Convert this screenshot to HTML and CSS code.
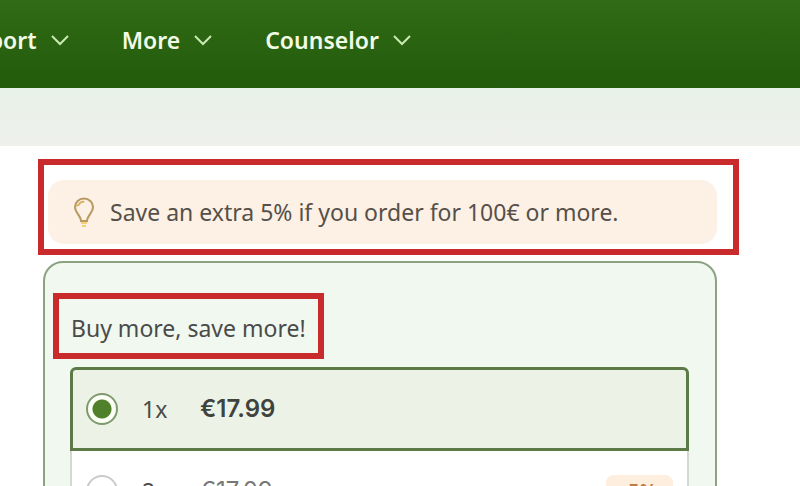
FILE: index.html
```html
<!DOCTYPE html>
<html lang="en">
  <head>
    <meta charset="UTF-8" />
    <meta name="viewport" content="width=device-width, initial-scale=1.0" />
    <title>Buy more, save more</title>
    <link rel="stylesheet" href="styles.css">
  </head>
  <body>
    <header class="header">
      <nav class="nav">
        <a href="#">Support
          <svg class="chevron" viewBox="0 0 18 12"><path d="M1 2l8 8 8-8" /></svg>
        </a>
        <a href="#">More
          <svg class="chevron" viewBox="0 0 18 12"><path d="M1 2l8 8 8-8" /></svg>
        </a>
        <a href="#">Counselor
          <svg class="chevron" viewBox="0 0 18 12"><path d="M1 2l8 8 8-8" /></svg>
        </a>
      </nav>
    </header>
    <div class="band"></div>

    <main class="content">
      <!-- discount notice -->
      <div class="mark mark-notice">
        <p class="notice">
          <svg class="bulb" viewBox="0 0 20 30">
            <path class="bulb-glass" d="M7 24C7 19 1 15.500 1 10a9 8.500 0 0 1 18 0C19 15.500 13 19 13 24z" />
            <path class="bulb-shine" d="M2 8c2 1 3 0 4-2s3 0 4-2" />
            <path class="bulb-base" d="M7 26h6M8 29h4" />
          </svg>
          Save an extra 5% if you order for 100€ or more.
        </p>
      </div>

      <!-- quantity offers -->
      <section class="card">
        <div class="mark mark-title">
          <h2 class="title">Buy more, save more!</h2>
        </div>
        <div class="options">
          <label class="option selected">
            <input type="radio" name="qty" value="1" checked />
            <span class="qty">1x</span>
            <span class="price">€17.99</span>
          </label>
          <label class="option">
            <input type="radio" name="qty" value="2" />
            <span class="qty">2x</span>
            <span class="price">€17.09</span>
            <span class="discount">-5%</span>
          </label>
        </div>
      </section>
    </main>
  </body>
</html>
```

FILE: styles.css
```css
* {
  box-sizing: border-box;
  margin: 0;
  padding: 0;
}
body {
  height: 100vh;
  overflow: hidden;
  background-color: #fff;
  color: #4a4b49;
  font-family: "Noto Sans", sans-serif;
  font-size: 23px;
  line-height: 32px;
}

/* header */
.header {
  padding: 24px 0 32px;
  background: linear-gradient(#326b16, #215b0b);
}
.nav {
  display: flex;
  gap: 53px;
  margin-left: -53px;
}
.nav a {
  display: flex;
  align-items: center;
  gap: 14px;
  color: #f2fbe6;
  font-weight: 600;
  text-decoration: none;
}
.chevron {
  width: 18px;
  height: 12px;
  fill: none;
  stroke: #c9eab2;
  stroke-width: 2;
}
.band {
  height: 58px;
  background: linear-gradient(#e8f2e8, #eff0ec);
}

.content {
  padding: 13px 61px 0 38px;
}

/* red highlight frames */
.mark {
  border: 6px solid #c92a2b;
}
.mark-notice {
  padding: 15px 16px 5px 4px;
}
.mark-title {
  width: fit-content;
  padding: 13px 12px 9px;
}

.notice {
  display: flex;
  align-items: center;
  gap: 16px;
  padding: 16px 26px;
  border-radius: 16px;
  background-color: #fdf0e5;
  color: #55504a;
}
.bulb {
  width: 20px;
  height: 30px;
  fill: none;
  stroke-width: 2;
}
.bulb-glass {
  stroke: #b79a62;
}
.bulb-shine {
  stroke: #d8b46c;
}
.bulb-base {
  stroke: #f5cf7a;
}

/* card */
.card {
  margin: 6px 22px 0 5px;
  padding: 30px 8px 0;
  border: 2px solid #8ba283;
  border-radius: 20px;
  background-color: #f1f8f0;
}
.title {
  font-size: 23px;
  font-weight: 400;
}
.options {
  margin: 8px 18px 0 17px;
}
.option {
  display: flex;
  align-items: center;
  height: 82px;
  padding: 0 14px;
  border: 2px solid #d3d8d1;
  border-top: 0;
  background-color: #fff;
}
.option.selected {
  height: 84px;
  padding: 0 13px;
  border: 3px solid #5b7a45;
  border-radius: 6px 6px 0 0;
  background-color: #ecf3e6;
}
.option input {
  appearance: none;
  width: 32px;
  height: 32px;
  border: 2px solid #c9cbc8;
  border-radius: 50%;
  background-color: #fff;
}
.option input:checked {
  border-color: #7f9a6e;
  background: radial-gradient(circle, #50802a 9px, #fbfff6 10px);
}
.qty {
  width: 58px;
  margin-left: 24px;
}
.price {
  font-family: Inter, sans-serif;
  font-size: 24px;
  font-weight: 600;
  color: #3f433d;
}
.option:not(.selected) .price {
  font-weight: 400;
  color: #777;
}
.discount {
  margin-left: auto;
  padding: 0 16px;
  border-radius: 8px;
  background-color: #fdeedd;
  color: #c27a45;
  font-size: 20px;
  font-weight: 600;
}
```
